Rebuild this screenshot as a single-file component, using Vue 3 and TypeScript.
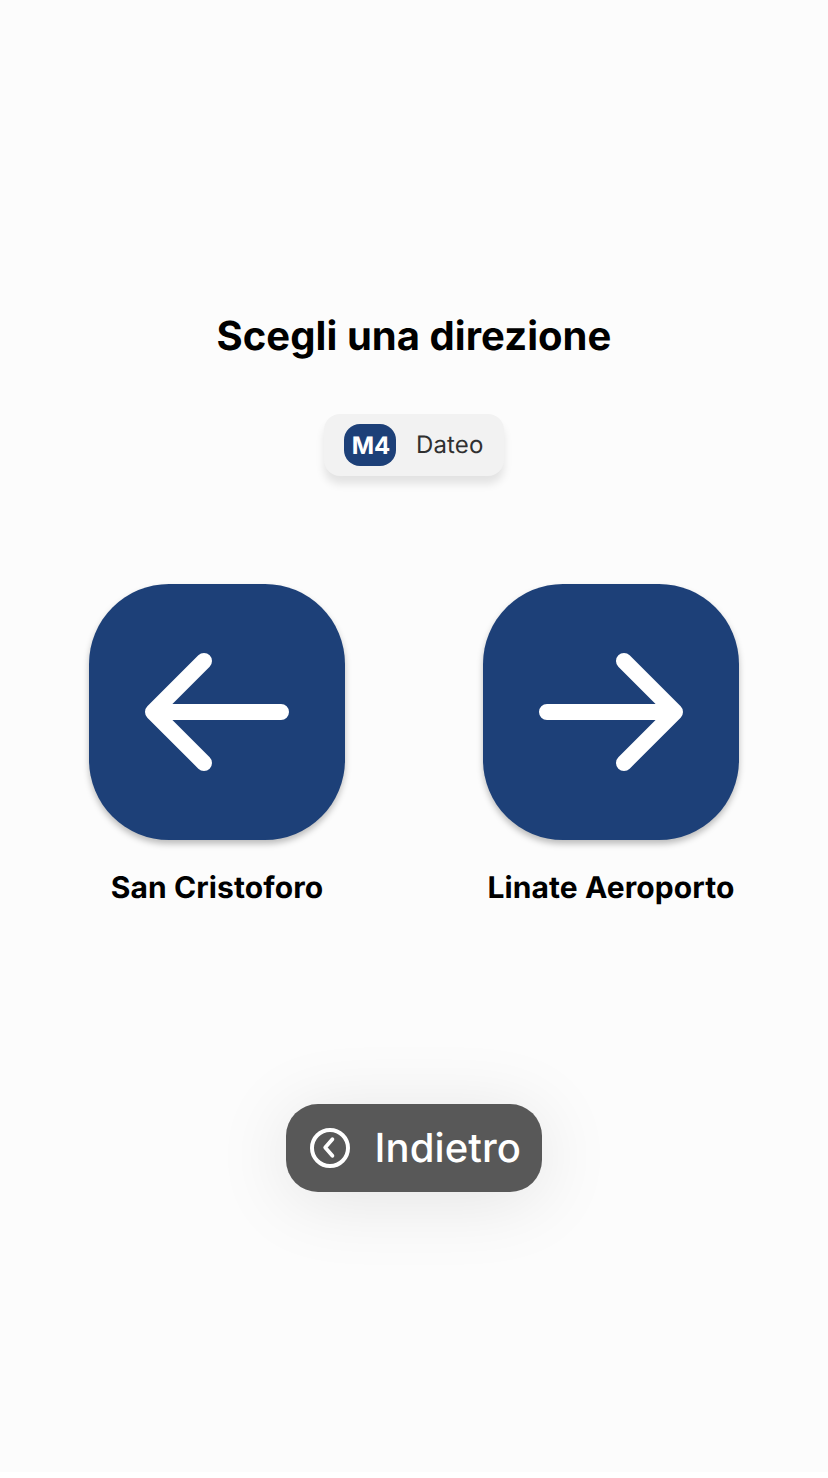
<script setup lang="ts">
interface Direction {
  name: string
  arrow: string
}

const line = 'M4'
const station = 'Dateo'

const directions: Direction[] = [
  { name: 'San Cristoforo', arrow: 'M192 128H64M115 77L64 128L115 179' },
  { name: 'Linate Aeroporto', arrow: 'M64 128H192M141 77L192 128L141 179' },
]
</script>

<template>
  <main class="screen">
    <h1 class="title">Scegli una direzione</h1>

    <div class="stop">
      <span class="line">{{ line }}</span>
      <span class="station">{{ station }}</span>
    </div>

    <div class="directions">
      <div v-for="direction in directions" :key="direction.name" class="direction">
        <button class="tile" type="button" :aria-label="direction.name">
          <svg class="arrow" viewBox="0 0 256 256" fill="none">
            <path :d="direction.arrow" />
          </svg>
        </button>
        <span class="name">{{ direction.name }}</span>
      </div>
    </div>

    <button class="back" type="button">
      <svg class="back-icon" viewBox="0 0 40 40" fill="none">
        <circle cx="20" cy="20" r="18" />
        <path class="chevron" d="M22.4 11.3L15.2 19.6L22.4 27.8" />
      </svg>
      <span class="back-label">Indietro</span>
    </button>
  </main>
</template>

<style>
body {
  margin: 0;
  background: #ffffff;
}
</style>

<style scoped>
.screen {
  box-sizing: border-box;
  display: flex;
  flex-direction: column;
  align-items: center;
  width: 828px;
  height: 1472px;
  padding-top: 312px;
  background: #fcfcfc;
  color: #000000;
  font-family: Inter, "Liberation Sans", sans-serif;
  text-rendering: geometricPrecision;
}

.title {
  margin: 0;
  font-size: 40px;
  line-height: 48px;
  font-weight: 700;
  letter-spacing: 0.05px;
  white-space: nowrap;
}

.stop {
  box-sizing: border-box;
  display: flex;
  align-items: center;
  gap: 20px;
  width: 180px;
  height: 62px;
  margin-top: 54px;
  padding-left: 20px;
  border-radius: 16px;
  background: #f2f2f2;
  box-shadow: 0 8px 8px rgba(0, 0, 0, 0.1);
}

.line {
  box-sizing: border-box;
  display: flex;
  align-items: center;
  justify-content: center;
  width: 52px;
  height: 42px;
  padding: 2px 0 0 2px;
  border-radius: 16px;
  background: #1d4078;
  color: #ffffff;
  font-size: 24px;
  line-height: 30px;
  font-weight: 700;
}

.station {
  color: #303030;
  font-size: 24px;
  line-height: 30px;
  font-weight: 400;
  letter-spacing: 0.15px;
}

.directions {
  display: flex;
  gap: 138px;
  margin-top: 108px;
}

.direction {
  display: flex;
  flex-direction: column;
  align-items: center;
  width: 256px;
}

.tile {
  width: 256px;
  height: 256px;
  padding: 0;
  border: 0;
  border-radius: 80px;
  background: #1d4078;
  box-shadow: 0 4px 6px rgba(0, 0, 0, 0.25);
}

.arrow {
  display: block;
  width: 256px;
  height: 256px;
  stroke: #ffffff;
  stroke-width: 16;
  stroke-linecap: round;
  stroke-linejoin: round;
}

.name {
  margin-top: 30px;
  font-size: 30px;
  line-height: 36px;
  font-weight: 700;
  letter-spacing: 0.1px;
  white-space: nowrap;
}

.back {
  box-sizing: border-box;
  display: flex;
  align-items: center;
  gap: 24.5px;
  width: 256px;
  height: 88px;
  margin-top: 198px;
  padding: 0 0 0 24px;
  border: 0;
  border-radius: 32px;
  background: #585858;
  color: #ffffff;
  font-family: inherit;
  text-rendering: inherit;
  box-shadow: 0 8px 76px rgba(0, 0, 0, 0.1);
}

.back-icon {
  width: 40px;
  height: 40px;
  stroke: #ffffff;
  stroke-width: 4;
  stroke-linecap: round;
  stroke-linejoin: round;
}

.chevron {
  stroke-width: 3.8;
}

.back-label {
  font-size: 40px;
  line-height: 48px;
  font-weight: 500;
  letter-spacing: 0.1px;
}
</style>
